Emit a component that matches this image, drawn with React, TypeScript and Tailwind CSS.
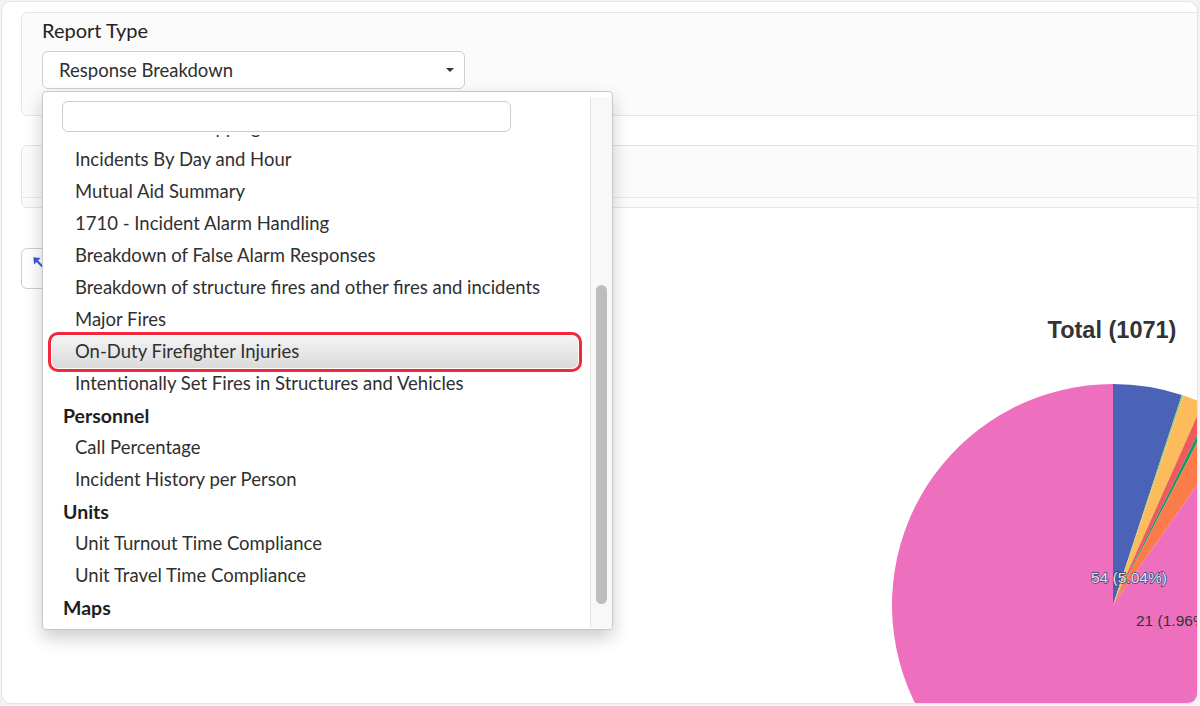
import React from "react";

type Row = { label: string; group?: boolean; active?: boolean };

const rows: Row[] = [
  { label: "Incident Heat Mapping" },
  { label: "Incidents By Day and Hour" },
  { label: "Mutual Aid Summary" },
  { label: "1710 - Incident Alarm Handling" },
  { label: "Breakdown of False Alarm Responses" },
  { label: "Breakdown of structure fires and other fires and incidents" },
  { label: "Major Fires" },
  { label: "On-Duty Firefighter Injuries", active: true },
  { label: "Intentionally Set Fires in Structures and Vehicles" },
  { label: "Personnel", group: true },
  { label: "Call Percentage" },
  { label: "Incident History per Person" },
  { label: "Units", group: true },
  { label: "Unit Turnout Time Compliance" },
  { label: "Unit Travel Time Compliance" },
  { label: "Maps", group: true },
];

// pie geometry, in chart coordinates
const cx = 1092;
const cy = 316;
const r = 221;

const slices = [
  { from: 0, to: 18.15, color: "#4a63b7" },
  { from: 18.15, to: 18.6, color: "#9ccf6e" },
  { from: 18.6, to: 24, color: "#fdbc5b" },
  { from: 24, to: 26.4, color: "#ef5a5c" },
  { from: 26.4, to: 27.4, color: "#16986b" },
  { from: 27.4, to: 35, color: "#fb7b4b" },
  { from: 35, to: 360, color: "#ef6fbf" },
];

const point = (deg: number) => {
  const a = (deg * Math.PI) / 180;
  return [cx + r * Math.sin(a), cy - r * Math.cos(a)];
};

const arc = (from: number, to: number) => {
  const [x0, y0] = point(from);
  const [x1, y1] = point(to);
  const large = to - from > 180 ? 1 : 0;
  return `M${cx} ${cy} L${x0} ${y0} A${r} ${r} 0 ${large} 1 ${x1} ${y1} Z`;
};

const ReportDropdown = () => (
  <div className="absolute left-0 top-[calc(100%+2px)] z-10 flex h-[539px] w-[571px] rounded-[4px] border border-[#c8c8c8] bg-white shadow-[0_8px_18px_rgba(0,0,0,0.2)]">
    <div className="flex min-w-0 flex-1 flex-col">
      <div className="pb-[3px] pl-[19px] pt-[9px]">
        <div className="h-[31px] w-[449px] rounded-[6px] border border-[#cdcdcd] bg-white" />
      </div>
      <div className="flex-1 overflow-hidden">
        <ul className="-mt-[23px]">
          {rows.map((row, index) => (
            <li
              key={index}
              className={
                row.group
                  ? "ml-[9px] mr-[12px] flex h-[32px] items-center pl-[11px] text-[19.5px] font-bold text-[#1e1e1e]"
                  : row.active
                    ? "ml-[9px] mr-[12px] flex h-[32px] items-center rounded-[6px] bg-linear-to-b from-[#f4f4f4] to-[#dadada] pl-[23px] text-[18.5px] text-[#303030] outline-3 outline-offset-1 outline-[#f2293d]"
                    : "ml-[9px] mr-[12px] flex h-[32px] items-center pl-[23px] text-[18.5px] text-[#303030]"
              }
            >
              {row.label}
            </li>
          ))}
        </ul>
      </div>
    </div>
    <div className="mb-[1px] mt-[5px] flex w-[22px] justify-center border-l border-[#e4e4e4] bg-[#f8f8f8]">
      <div className="mt-[188px] h-[319px] w-[11px] rounded-full bg-[#bdbdbd]" />
    </div>
  </div>
);

const App = () => {
  return (
    <div className="h-[706px] w-[1200px] overflow-hidden bg-[#f3f3f6] pl-[1px] pt-[1px] font-[Lato,sans-serif]">
      <div className="h-[703px] w-[1197px] overflow-hidden rounded-[10px] border border-[#e3e3ea] bg-white">
        {/* report type panel */}
        <div className="-mr-[8px] ml-[19px] mt-[10px] h-[104px] rounded-[6px] border border-[#e4e4e4] bg-[#fbfbfb] pl-[20px] pt-[5px]">
          <div className="text-[20px] leading-[24px] text-[#222]">Report Type</div>
          <div className="relative mt-[9px] w-[423px]">
            <div className="flex h-[38px] items-center justify-between rounded-[6px] border border-[#cfcfcf] bg-white pl-[16px] pr-[10px] text-[18.5px] text-[#303030]">
              <span className="translate-y-[1px]">Response Breakdown</span>
              <span className="h-0 w-0 border-x-[4px] border-t-[4px] border-x-transparent border-t-[#333]" />
            </div>
            <ReportDropdown />
          </div>
        </div>

        {/* filters panel */}
        <div className="-mr-[8px] ml-[19px] mt-[29px] h-[63px] rounded-[6px] border border-[#e4e4e4] bg-[#fbfbfb]">
          <div className="h-[52px] border-b border-[#e8e8e8]" />
        </div>

        {/* chart */}
        <div className="ml-[19px] pt-[40px]">
          <button className="flex h-[41px] w-[46px] items-start rounded-[6px] border border-[#cfcfcf] bg-white pl-[11px] pt-[8px]">
            <svg width="11" height="11" viewBox="0 0 10 10">
              <path d="M2.5 2.5 L9 9" stroke="#2f5ce8" strokeWidth="1.9" />
              <path d="M0.3 0.3 L6.8 1 L1 6.8 Z" fill="#2f5ce8" />
            </svg>
          </button>
          <svg width="1176" height="414" className="block">
            <text
              x="1091"
              y="49"
              textAnchor="middle"
              fontFamily="'Liberation Sans', Arial, sans-serif"
              fontSize="23.5"
              fontWeight="bold"
              fill="#333"
            >
              Total (1071)
            </text>
            {slices.map((s, index) => (
              <path key={index} d={arc(s.from, s.to)} fill={s.color} />
            ))}
            <text
              x="1070"
              y="294"
              fontFamily="'Liberation Sans', Arial, sans-serif"
              fontSize="15.5"
              fill="#dfe3f6"
              stroke="#3c4466"
              strokeWidth="1.4"
              paintOrder="stroke"
            >
              54 (5.04%)
            </text>
            <text
              x="1115"
              y="337"
              fontFamily="'Liberation Sans', Arial, sans-serif"
              fontSize="15.5"
              fill="#333"
            >
              21 (1.96%)
            </text>
          </svg>
        </div>
      </div>
    </div>
  );
};

export default App;
